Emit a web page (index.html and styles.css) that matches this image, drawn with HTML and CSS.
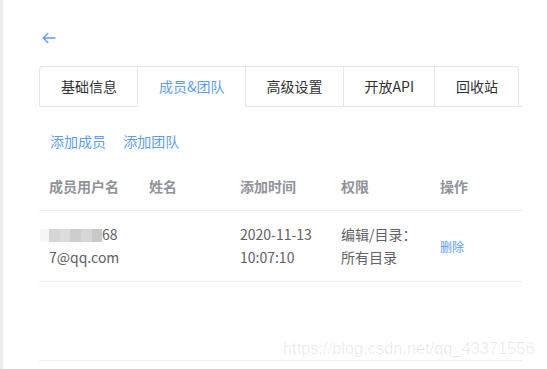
FILE: index.html
```html
<!DOCTYPE html>
<html lang="zh-CN">
<head>
    <meta charset="UTF-8">
    <meta name="viewport" content="width=device-width, initial-scale=1.0">
    <title>成员&amp;团队</title>
    <link rel="stylesheet" href="styles.css">
</head>
<body>
    <div class="side-strip"></div>
    <div class="page">
        <a class="back" href="#">
            <svg width="14" height="12" viewBox="0 0 14 12">
                <path d="M13.5 6H1.2 M6.2 1 L1.2 6 L6.2 11" fill="none" stroke="#5c9dfb" stroke-width="1.3"/>
            </svg>
        </a>

        <div class="tabs">
            <div class="tab first">基础信息</div>
            <div class="tab active">成员&amp;团队</div>
            <div class="tab">高级设置</div>
            <div class="tab">开放API</div>
            <div class="tab last">回收站</div>
        </div>

        <div class="toolbar">
            <a href="#">添加成员</a>
            <a href="#">添加团队</a>
        </div>

        <div class="table">
            <div class="row head">
                <div class="cell">成员用户名</div>
                <div class="cell">姓名</div>
                <div class="cell">添加时间</div>
                <div class="cell">权限</div>
                <div class="cell">操作</div>
            </div>
            <div class="row">
                <div class="cell"><span class="mosaic"><i></i><i></i><i></i><i></i><i></i><i></i></span>68<br>7@qq.com</div>
                <div class="cell"></div>
                <div class="cell">2020-11-13<br>10:07:10</div>
                <div class="cell">编辑/目录：<br>所有目录</div>
                <div class="cell op"><a href="#">删除</a></div>
            </div>
            <div class="empty"></div>
        </div>
    </div>
    <div class="watermark">https://blog.csdn.net/qq_43371556</div>
</body>
</html>
```

FILE: styles.css
```css
body {
    margin: 0;
    background: #fff;
    font-family: "Noto Sans CJK SC", "Microsoft YaHei", sans-serif;
    font-size: 14px;
    color: #606266;
}

.side-strip {
    position: fixed;
    left: 0;
    top: 0;
    bottom: 0;
    width: 3px;
    background: #ebebf1;
}

.page {
    width: 483px;
    margin-left: 39px;
}

a {
    text-decoration: none;
    color: #5c9dfb;
}

.back {
    display: block;
    width: 14px;
    height: 12px;
    margin-top: 32px;
    margin-left: 3px;
}

.back svg {
    display: block;
}

.tabs {
    display: flex;
    margin-top: 22px;
    border-bottom: 1px solid #e4e7ed;
}

.tab {
    height: 39px;
    line-height: 39px;
    padding: 0 20px 0 21px;
    border-top: 1px solid #e4e7ed;
    border-left: 1px solid #e4e7ed;
    border-bottom: 1px solid #e4e7ed;
    margin-bottom: -1px;
    color: #303133;
}

.tab.first {
    border-top-left-radius: 4px;
}

.tab.last {
    border-right: 1px solid #e4e7ed;
    border-top-right-radius: 4px;
}

.tab.active {
    color: #5c9dfb;
    border-bottom-color: #fff;
}

.toolbar {
    margin-top: 24px;
    padding-left: 11px;
    line-height: 20px;
}

.toolbar a {
    margin-right: 14px;
}

.table {
    margin-top: 12px;
}

.row {
    display: grid;
    grid-template-columns: 100px 91px 101px 99px 1fr;
    border-bottom: 1px solid #ebeef5;
}

.cell {
    padding-left: 10px;
    line-height: 23px;
}

.head .cell {
    height: 47px;
    line-height: 46px;
    color: #909399;
    font-weight: bold;
}

.row:not(.head) .cell {
    padding-top: 12px;
    padding-bottom: 12px;
    height: 46px;
}

.op {
    display: flex;
    align-items: center;
    font-size: 12px;
}

.mosaic {
    display: inline-flex;
    vertical-align: -2px;
    margin-left: -9px;
    height: 13px;
}

.mosaic i {
    display: block;
    width: 10px;
    height: 13px;
    background: #d4d4d4;
}

.mosaic i:nth-child(1) { background: #f6f6f6; width: 9px; }
.mosaic i:nth-child(2) { background: #d6d6d9; width: 11px; }
.mosaic i:nth-child(3) { background: #dcdcdc; width: 10px; }
.mosaic i:nth-child(4) { background: #cdcdcd; width: 11px; }
.mosaic i:nth-child(5) { background: #d6d6d6; width: 11px; }
.mosaic i:nth-child(6) { background: #c9c9c9; width: 10px; }

.empty {
    height: 78px;
    border-bottom: 1px solid #ebeef5;
}

.watermark {
    position: absolute;
    top: 339px;
    left: 283px;
    font-family: "Liberation Sans", Arial, sans-serif;
    font-size: 16.4px;
    color: rgba(0, 0, 0, 0.09);
    white-space: nowrap;
}
```
